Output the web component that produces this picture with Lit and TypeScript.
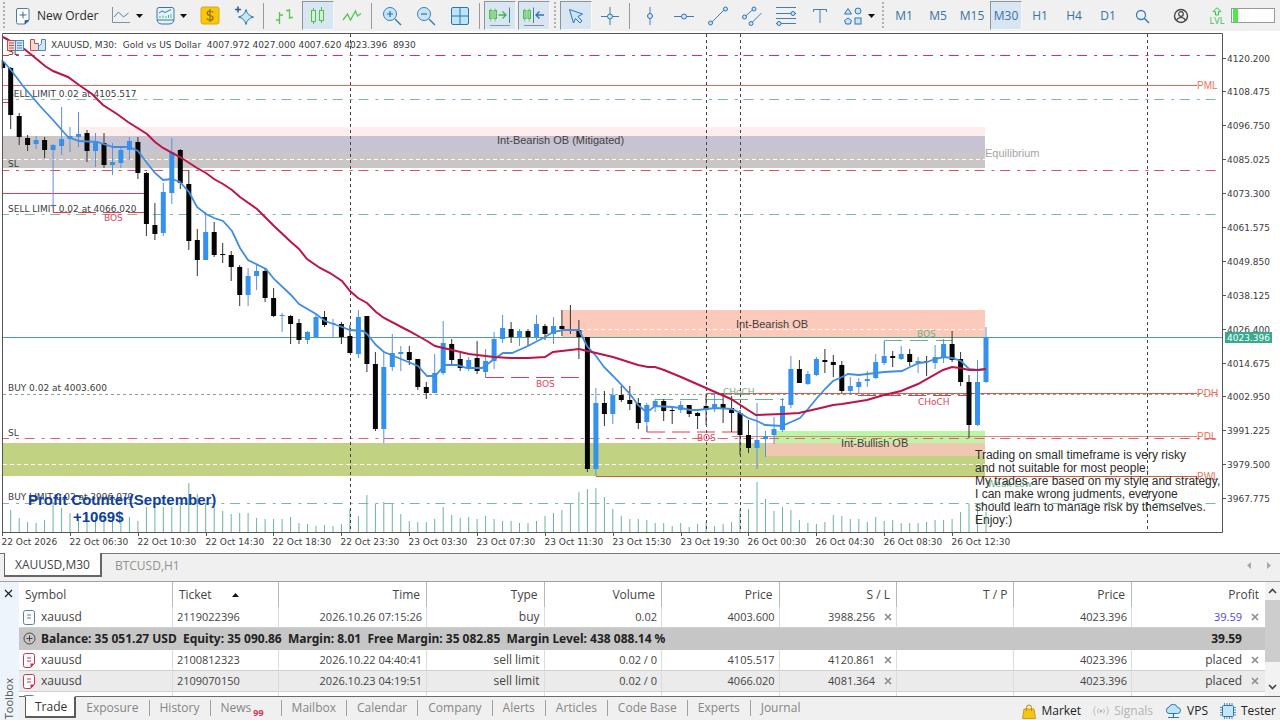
import { LitElement, html, svg, css, nothing } from "lit";
import { customElement, state } from "lit/decorators.js";
import { classMap } from "lit/directives/class-map.js";

type Candle = [up: 0 | 1, high: number, top: number, bottom: number, low: number];

const X0 = 2.2;
const STEP = 8.481;
const cx = (i: number) => Math.round((X0 + STEP * i) * 10) / 10;

const candles: Candle[] = [
  [0, 60, 62, 68, 69], [0, 67, 68, 115, 129], [0, 113, 116, 137, 145], [0, 135, 138, 145, 151],
  [1, 136, 140, 144, 149], [0, 137, 140, 150, 158], [1, 144, 145, 150, 208], [1, 107, 139, 146, 155],
  [1, 127, 136, 139, 152], [1, 112, 134, 137, 147], [0, 130, 133, 151, 162], [1, 133, 143, 151, 167],
  [0, 133, 143, 165, 168], [1, 143, 162, 165, 175], [1, 147, 150, 163, 168], [1, 137, 141, 150, 160],
  [0, 137, 142, 173, 179], [0, 172, 173, 224, 236], [0, 203, 225, 234, 240], [1, 183, 192, 233, 236],
  [1, 138, 152, 193, 204], [0, 149, 150, 183, 189], [0, 170, 184, 241, 250], [0, 229, 240, 260, 276],
  [1, 212, 232, 260, 260], [0, 222, 232, 255, 257], [0, 243, 254, 255, 263], [0, 251, 255, 267, 281],
  [0, 265, 267, 295, 306], [1, 268, 276, 295, 306], [1, 264, 271, 276, 290], [0, 268, 271, 298, 302],
  [0, 288, 298, 316, 317], [1, 313, 315, 316, 332], [0, 315, 316, 324, 344], [0, 319, 323, 340, 344],
  [1, 331, 332, 340, 344], [1, 314, 317, 337, 337], [0, 311, 317, 325, 327], [1, 319, 323, 324, 337],
  [0, 322, 324, 337, 344], [0, 325, 336, 353, 353], [1, 310, 317, 354, 358], [0, 316, 316, 364, 372],
  [0, 352, 364, 429, 431], [1, 352, 367, 429, 443], [1, 334, 353, 367, 371], [1, 346, 352, 354, 371],
  [0, 346, 352, 360, 365], [0, 359, 359, 387, 390], [0, 382, 387, 393, 399], [1, 354, 373, 393, 393],
  [1, 321, 343, 373, 375], [0, 339, 344, 360, 365], [0, 353, 359, 368, 371], [1, 357, 360, 368, 371],
  [0, 341, 358, 371, 374], [1, 349, 361, 372, 378], [1, 332, 339, 361, 369], [1, 315, 328, 339, 343],
  [0, 322, 329, 337, 343], [1, 329, 331, 337, 346], [0, 329, 331, 337, 346], [1, 315, 324, 337, 340],
  [0, 324, 326, 334, 340], [1, 317, 326, 334, 344], [0, 310, 326, 329, 336], [0, 305, 329, 330, 334],
  [0, 320, 330, 337, 359], [0, 337, 337, 469, 472], [1, 388, 403, 469, 476], [0, 391, 403, 414, 426],
  [1, 388, 395, 414, 424], [0, 386, 395, 400, 402], [0, 386, 400, 404, 410], [0, 398, 403, 423, 429],
  [1, 403, 405, 422, 432], [1, 399, 401, 406, 412], [0, 399, 401, 411, 421], [0, 407, 410, 411, 424],
  [1, 401, 405, 410, 413], [0, 405, 405, 414, 417], [0, 412, 413, 416, 429], [0, 395, 406, 410, 425],
  [1, 393, 404, 409, 412], [0, 393, 404, 408, 423], [0, 396, 408, 413, 432], [0, 410, 413, 435, 455],
  [0, 420, 435, 448, 453], [1, 403, 440, 448, 469], [1, 431, 436, 439, 457], [1, 417, 429, 435, 444],
  [1, 398, 406, 430, 432], [1, 356, 369, 405, 408], [0, 360, 369, 383, 383], [1, 371, 374, 384, 385],
  [1, 357, 359, 375, 376], [0, 349, 360, 362, 373], [0, 355, 362, 365, 377], [0, 361, 365, 391, 393],
  [1, 377, 386, 391, 393], [1, 378, 382, 387, 393], [1, 371, 379, 381, 387], [1, 354, 362, 378, 379],
  [1, 341, 356, 363, 365], [0, 351, 356, 358, 367], [1, 346, 354, 359, 360], [0, 349, 354, 362, 366],
  [1, 357, 361, 363, 373], [0, 356, 361, 362, 376], [1, 345, 357, 363, 369], [1, 339, 344, 358, 363],
  [0, 331, 344, 360, 362], [0, 352, 359, 382, 386], [0, 375, 382, 425, 438], [1, 360, 382, 425, 426],
  [1, 327, 337, 382, 383],
];

const volumeTops = [
  532, 510, 518, 522, 523, 520, 502, 508, 513, 516, 514, 517, 515, 516, 518, 517, 521, 507, 508, 507, 507, 505,
  483, 494, 503, 507, 511, 514, 513, 513, 518, 519, 519, 519, 517, 523, 524, 526, 525, 526, 524, 509, 516, 495,
  504, 502, 504, 514, 521, 522, 522, 519, 507, 515, 518, 517, 519, 516, 519, 521, 521, 523, 523, 521, 516, 513,
  510, 504, 492, 489, 488, 497, 509, 516, 519, 519, 520, 523, 523, 526, 523, 527, 524, 522, 526, 524, 522, 509,
  509, 482, 499, 511, 507, 510, 520, 523, 524, 522, 515, 516, 519, 519, 522, 517, 521, 520, 523, 523, 523, 522,
  520, 520, 519, 512, 504, 504, 512,
];

const fastAverage =
  "3,61 11,70 23,86 40,106 53,120 68,137 79,141 97,142 113,147 129,147 138,151 147,163 155,173 163,180 172,179 180,182 189,192 197,207 206,214 214,218 223,221 232,231 240,248 248,260 266,269 274,279 291,295 299,304 316,314 325,321 342,327 350,330 363,331 367,334 376,345 384,352 401,359 418,366 427,376 435,376 445,365 457,365 467,368 482,368 493,360 503,353 512,353 528,346 545,337 553,332 563,330 579,330 587,346 596,356 604,367 613,376 630,394 638,405 645,411 650,410 655,406 672,407 681,408 690,410 698,410 715,408 732,409 740,413 748,418 757,421 765,425 782,426 791,422 800,418 808,409 817,398 825,389 833,381 842,377 848,374 859,375 867,374 876,373 884,372 902,371 910,367 919,363 927,362 935,359 944,357 952,358 961,361 969,369 978,370 986,369";
const slowAverage =
  "3,37 23,48 33,56 45,66 53,71 68,77 79,85 92,94 103,105 117,114 128,122 147,134 155,142 163,148 180,157 197,168 206,173 214,179 223,184 232,190 240,197 257,209 274,226 291,242 299,249 307,259 320,268 330,273 342,281 350,291 358,298 367,303 376,312 384,318 409,331 427,341 435,346 452,350 469,354 494,357 511,358 528,358 545,357 553,352 579,349 596,353 613,357 638,365 648,367 655,367 664,370 681,377 706,388 731,399 748,410 756,415 782,414 799,413 825,407 833,405 842,404 867,400 884,395 901,391 918,384 943,370 952,367 960,368 969,370 978,370 986,369";

const prices = [
  "4120.200", "4108.475", "4096.750", "4085.025", "4073.300", "4061.575", "4049.850", "4038.125",
  "4026.400", "4014.675", "4002.950", "3991.225", "3979.500", "3967.775",
];
const times = [
  "22 Oct 2026", "22 Oct 06:30", "22 Oct 10:30", "22 Oct 14:30", "22 Oct 18:30", "22 Oct 23:30", "23 Oct 03:30",
  "23 Oct 07:30", "23 Oct 11:30", "23 Oct 15:30", "23 Oct 19:30", "26 Oct 00:30", "26 Oct 04:30", "26 Oct 08:30",
  "26 Oct 12:30",
];
const note = [
  "Trading on small timeframe is very risky",
  "and not suitable for most people.",
  "My trades are based on my style and strategy,",
  "I can make wrong judments, everyone",
  "should learn to manage risk by themselves.",
  "Enjoy:)",
];

@customElement("price-chart")
class PriceChart extends LitElement {
  static styles = css`
    :host { display: block; background: #fff; }
    svg { display: block; width: 100%; height: auto; }
    text { font-family: "DejaVu Sans", sans-serif; font-size: 9px; fill: #3c3c3c; white-space: pre; }
    .arial { font-family: "Liberation Sans", Arial, sans-serif; font-size: 11px; fill: #45403f; }
    .note { font-family: "Liberation Sans", Arial, sans-serif; font-size: 12px; fill: #2c2c2c; }
    .profit { font-family: "Liberation Sans", Arial, sans-serif; font-size: 15px; font-weight: 700; fill: #103f9f; }
    .level { font-family: "Liberation Sans", Arial, sans-serif; font-size: 10px; fill: #ee7058; }
    .muted { font-family: "Liberation Sans", Arial, sans-serif; font-size: 11px; fill: #a3a3a3; }
    .sell { fill: #dd4560; }
    .buy { fill: #6cb389; }
    .now { fill: #fff; }
  `;

  private dashDot(y: number, color: string) {
    return svg`<line x1="3" x2="1218" y1=${y} y2=${y} stroke=${color} stroke-dasharray="10 7 3 5.670" stroke-dashoffset="4"/>`;
  }

  private candle([up, high, top, bottom, low]: Candle, i: number) {
    const x = cx(i);
    const color = up ? "#3492ee" : "#050505";
    return svg`
      <line x1=${x} x2=${x} y1=${high} y2=${low} stroke=${up ? "#5f8fe0" : "#333"}/>
      <rect x=${i ? x - 2.5 : x} y=${top} width=${i ? 5 : 3} height=${Math.max(bottom - top, 1)} fill=${color}/>`;
  }

  render() {
    return html`<svg viewBox="0 31 1280 522" role="img" aria-label="XAUUSD M30 candlestick chart">
      <rect x="3" y="136" width="982" height="32" fill="#cac6c6"/>
      <rect x="78" y="127" width="907" height="9" fill="#fdeeed"/>
      <rect x="78" y="136" width="907" height="16" fill="#c6c4d3"/>
      <rect x="562" y="310" width="423" height="27" fill="#fbcabb"/>
      <rect x="3" y="443" width="982" height="33" fill="#c1d383"/>
      <rect x="774" y="431" width="211" height="12" fill="#bbf6a5"/>
      <rect x="765" y="443" width="220" height="13" fill="#f0c8b1"/>

      <g stroke="#fff" stroke-dasharray="4 3">
        <line x1="3" x2="985" y1="159.5" y2="159.5"/>
        <line x1="580" x2="985" y1="329.5" y2="329.5"/>
        <line x1="3" x2="985" y1="464.5" y2="464.5"/>
      </g>

      ${this.dashDot(55.5, "#d8305a")} ${this.dashDot(99.5, "#7fb8a2")}
      ${this.dashDot(170.5, "#d8506c")} ${this.dashDot(214.5, "#7fb8a2")}
      ${this.dashDot(438.5, "#e65c78")} ${this.dashDot(503.5, "#7fb8a2")}
      <line x1="3" x2="1197" y1="85.5" y2="85.5" stroke="#f2625e"/>
      <line x1="3" x2="1222" y1="337.5" y2="337.5" stroke="#4fa389"/>
      <line x1="3" x2="1218" y1="394.5" y2="394.5" stroke="#8c9c98" stroke-dasharray="3 3"/>
      <line x1="706" x2="1197" y1="393.5" y2="393.5" stroke="#e8553e"/>
      <line x1="732" x2="1197" y1="436.5" y2="436.5" stroke="#d8887f"/>
      <line x1="596" x2="1197" y1="476.5" y2="476.5" stroke="#cf5f35"/>
      <g stroke="#e33b4f">
        <line x1="3" x2="11" y1="102.5" y2="102.5"/>
        <line x1="3" x2="147" y1="193.5" y2="193.5"/>
        <line x1="53" x2="147" y1="212.5" y2="212.5" stroke-dasharray="18 7"/>
        <path d="M485.500 372v5.500h96" fill="none" stroke-dasharray="24 7 18 7 18 7 18 7"/>
        <path d="M647 426v6h93" fill="none" stroke-dasharray="24 7 18 7 18 7 18 7"/>
        <line x1="858" x2="969" y1="395.500" y2="395.500" stroke-dasharray="18 7"/>
      </g>
      <g stroke="#6cb389" fill="none">
        <line x1="655" x2="784" y1="399.500" y2="399.500" stroke-dasharray="18 7"/>
        <path d="M884.500 354v-13.500h68" stroke-dasharray="31 8 18 8 18"/>
      </g>

      <g stroke="#6bb39c">
        ${volumeTops.map((y, i) => svg`<line x1=${cx(i)} x2=${cx(i)} y1=${y} y2="532"/>`)}
      </g>

      <text x="8" y="55">SL</text>
      <text x="8" y="97">SELL LIMIT 0.02 at 4105.517</text>
      <text x="8" y="167">SL</text>
      <text x="8" y="212">SELL LIMIT 0.02 at 4066.020</text>
      <text x="8" y="391">BUY 0.02 at 4003.600</text>
      <text x="8" y="436">SL</text>
      <text x="8" y="500">BUY LIMIT 0.02 at 3996.079</text>

      <g stroke="#444" stroke-dasharray="3 3">
        ${[350.5, 706.5, 740.5, 1147.5].map((x) => svg`<line x1=${x} x2=${x} y1="34" y2="532"/>`)}
      </g>

      ${candles.map((c, i) => this.candle(c, i))}
      <polyline points=${fastAverage} fill="none" stroke="#3f8ee0" stroke-width="1.8"/>
      <polyline points=${slowAverage} fill="none" stroke="#bd1347" stroke-width="2"/>

      <text class="arial" x="497" y="144">Int-Bearish OB (Mitigated)</text>
      <text class="arial" x="736" y="328">Int-Bearish OB</text>
      <text class="arial" x="841" y="447">Int-Bullish OB</text>
      <text class="muted" x="985" y="157">Equilibrium</text>
      <text class="sell" x="104" y="221">BOS</text>
      <text class="sell" x="536" y="387">BOS</text>
      <text class="sell" x="697" y="441">BOS</text>
      <text class="sell" x="918" y="405">CHoCH</text>
      <text class="buy" x="723" y="395">CHoCH</text>
      <text class="buy" x="917" y="337">BOS</text>
      <text class="buy" x="987" y="487">Weak Low</text>
      <text class="level" x="1197" y="89">PML</text>
      <text class="level" x="1197" y="397">PDH</text>
      <text class="level" x="1197" y="440">PDL</text>
      <text class="level" x="1197" y="480">PWL</text>
      ${note.map((line, i) => svg`<text class="note" x="975" y=${459 + 13 * i}>${line}</text>`)}
      <text class="profit" x="28" y="505">Profit Counter(September)</text>
      <text class="profit" x="73" y="522">+1069$</text>

      <g>
        <rect x="7.500" y="40.500" width="8" height="10" fill="#f8d8d6" stroke="#c0504d"/>
        <rect x="15.500" y="40.500" width="8" height="10" fill="#d3e6f8" stroke="#4f86bd"/>
        <path d="M9 43h5M9 45.500h5M9 48h5" stroke="#c0504d"/>
        <path d="M17 43h5M17 45.500h5M17 48h5" stroke="#4f86bd"/>
        <path d="M30.500 39.500h4v4h4v7h-8z" fill="#f8d8d6" stroke="#c0504d"/>
        <path d="M45.500 39.500h-4v4l-2 2-1-1v6h7z" fill="#d3e6f8" stroke="#4f86bd"/>
      </g>
      <text x="51" y="48" xml:space="preserve">XAUUSD, M30:  Gold vs US Dollar  4007.972 4027.000 4007.620 4023.396  8930</text>

      <path d="M2.500 532V33.500H1222.500V532.500H2" fill="none" stroke="#555"/>
      ${prices.map((p, i) => {
        const y = Math.round(57.5 + 33.89 * i);
        return svg`<line x1="1222" x2="1226" y1=${y + 0.5} y2=${y + 0.5} stroke="#555"/><text x="1227" y=${y + 4}>${p}</text>`;
      })}
      <rect x="1225" y="332" width="47" height="11" fill="#36ab8d"/>
      <text class="now" x="1227" y="341">4023.396</text>
      ${times.map((t, i) => {
        const x = i === 0 ? 2.5 : Math.round(2 + 67.85 * i) + 0.5;
        return svg`<line x1=${x} x2=${x} y1="532" y2="536" stroke="#555"/><text x=${x - 1} y="545">${t}</text>`;
      })}
    </svg>`;
  }
}

const glyphs = {
  order: svg`<path d="M3.500 1.500h10q1.500 0 1.500 1.500v10l-4 4h-7q-1.500 0-1.500-1.500V3q0-1.500 1.500-1.500z" transform="translate(-1 0)" fill="#fff" stroke="#4a7cab"/><path d="M10 17v-3.500h4z" fill="#2f6da5" stroke="#2f6da5"/><path d="M8 4.500v7M4.500 8h7" stroke="#2f6da5"/>`,
  line: svg`<path d="M1.500 1v15.500H19" fill="none" stroke="#8a8f96"/><path d="M3 11l4.500-5 5 5 5-4" fill="none" stroke="#4a86bd"/>`,
  indicator: svg`<path d="M4 1.500h13q2 0 2 2v9q0 5.500-5 5.500H7q-5 0-5-5.500v-9q0-2 2-2z" fill="#e4f2fc" stroke="#3a76ad"/><path d="M2 14h17" stroke="#3a76ad"/><path d="M4 7l3-2 3 1.500L16 3.500" fill="none" stroke="#3a76ad"/><path d="M5 12v-2M8 12V9.500M11 12v-2M13.500 12V9M16 12V8" stroke="#4ec25a"/>`,
  dollar: svg`<rect x="1" y="1" width="18" height="17" rx="2" fill="#f7c708" stroke="#dba90a"/><path d="M13 6.500q-.8-1.500-3-1.500-2.800 0-2.800 2.200 0 1.800 2.900 2.300 3 .5 3 2.400 0 2.300-3 2.300-2.600 0-3.300-1.800M10 3v13" fill="none" stroke="#9a6a0a" stroke-width="1.200"/>`,
  sparkle: svg`<path d="M12 3.500q1.300 6.200 7.500 7.500-6.200 1.300-7.500 7.500-1.300-6.200-7.500-7.500 6.200-1.300 7.500-7.500z" fill="#c5e6fb" stroke="#2f74b3"/><path d="M4 .5v6M1 3.500h6" stroke="#2c5f94" stroke-width="1.600"/>`,
  bars: svg`<path d="M5.500 6v12M2 14h3.500M5.500 9H9M15.500 3v10M12 4.500h3.500M15.500 11.500H19" fill="none" stroke="#56c457" stroke-width="1.300"/>`,
  candles: svg`<rect x="3.500" y="4.500" width="4" height="11" fill="#d3f3d6" stroke="#4fc04f"/><rect x="11.500" y="4.500" width="4" height="10" fill="#d3f3d6" stroke="#4fc04f"/><path d="M5.500 2v2.500M5.500 15.500V18M13.500 1v3.500M13.500 14.500V17" stroke="#4fc04f"/>`,
  zigzag: svg`<path d="M1 14l4.500-6 3 6 5-9 2 5L19 7.500" fill="none" stroke="#56c457" stroke-width="1.300"/>`,
  zoomIn: svg`<circle cx="8" cy="8" r="6.500" fill="#c8e6fb" stroke="#3a7db8"/><path d="M13 13l6 6" stroke="#3a7db8" stroke-width="1.500"/><path d="M8 5v6M5 8h6" stroke="#2d6da6" stroke-width="1.200"/>`,
  zoomOut: svg`<circle cx="8" cy="8" r="6.500" fill="#c8e6fb" stroke="#3a7db8"/><path d="M13 13l6 6" stroke="#3a7db8" stroke-width="1.500"/><path d="M5 8h6" stroke="#2d6da6" stroke-width="1.200"/>`,
  grid: svg`<rect x="1.500" y="1.500" width="17" height="17" rx="1.500" fill="#bfe3fb" stroke="#2f74b3"/><path d="M10 1.500v17M1.500 10h17" stroke="#2f74b3"/>`,
  autoscroll: svg`<rect x="-.5" y="4.500" width="2.500" height="8" fill="#d3f3d6" stroke="#4fc04f"/><rect x="4" y="4.500" width="2.500" height="8" fill="#d3f3d6" stroke="#4fc04f"/><path d="M.7 2.500v13M5.200 2.500v13" stroke="#4fc04f" stroke-width=".7"/><path d="M8.500 9h7M12.500 5.500L16 9l-3.500 3.500" fill="none" stroke="#3cb84a" stroke-width="1.400"/><path d="M19.500 1.500V17" stroke="#4a7cab"/><path d="M0 19.500h20" stroke="#8a9098"/>`,
  shift: svg`<rect x="-.5" y="4.500" width="2.500" height="8" fill="#d3f3d6" stroke="#4fc04f"/><rect x="4" y="4.500" width="2.500" height="8" fill="#d3f3d6" stroke="#4fc04f"/><path d="M.7 2.500v13M5.200 2.500v13" stroke="#4fc04f" stroke-width=".7"/><path d="M9.500 1.500V17" stroke="#4a7cab"/><path d="M12.500 9H20M15.500 5.500L12 9l3.500 3.500" fill="none" stroke="#2f74b3" stroke-width="1.400"/><path d="M0 19.500h20" stroke="#8a9098"/>`,
  cursor: svg`<path d="M3.500 3.500l13 4.500-4.500 2.500 4 4.500-2 2-4.500-4.500-2 4.500z" fill="#c8e6fb" stroke="#2f74b3"/>`,
  cross: svg`<path d="M10 1v18M1 10.500h18" stroke="#3f7fb8"/><circle cx="10" cy="10.500" r="2.500" fill="#c8e6fb" stroke="#2f74b3"/>`,
  vline: svg`<path d="M10 1v18" stroke="#3f7fb8"/><circle cx="10" cy="10" r="2.500" fill="#c8e6fb" stroke="#2f74b3"/>`,
  hline: svg`<path d="M0 10.500h20" stroke="#3f7fb8"/><circle cx="10" cy="10.500" r="2.500" fill="#c8e6fb" stroke="#2f74b3"/>`,
  trend: svg`<path d="M2.500 17.500L17.500 2.500" stroke="#3f7fb8"/><circle cx="2.500" cy="17" r="2" fill="#c8e6fb" stroke="#2f74b3"/><circle cx="17.500" cy="3" r="2" fill="#c8e6fb" stroke="#2f74b3"/>`,
  channel: svg`<path d="M2.500 11L11.500 3M9 17.500L19.500 7" stroke="#3f7fb8"/><circle cx="2.500" cy="11" r="2" fill="#c8e6fb" stroke="#2f74b3"/><circle cx="12" cy="3" r="2" fill="#c8e6fb" stroke="#2f74b3"/><circle cx="9" cy="17.500" r="2" fill="#c8e6fb" stroke="#2f74b3"/>`,
  levels: svg`<path d="M0 1.500h20M0 7.500h20M0 12.500h20M0 17.500h20" stroke="#3f7fb8"/><circle cx="17" cy="7.500" r="2" fill="#c8e6fb" stroke="#2f74b3"/><circle cx="3" cy="17.500" r="2" fill="#c8e6fb" stroke="#2f74b3"/>`,
  text: svg`<path d="M3.500 6V3.500h13V6M10 3.500V17" fill="none" stroke="#3f7fb8"/>`,
  shapes: svg`<path d="M5 2.500L8.500 8h-7z" fill="#c8e6fb" stroke="#2f74b3"/><circle cx="15" cy="5" r="3" fill="#c8e6fb" stroke="#2f74b3"/><path d="M5 12l3.500 2.500L7.200 18H2.800L1.500 14.500z" fill="#c8e6fb" stroke="#2f74b3"/><rect x="12" y="12" width="6" height="6" fill="#c8e6fb" stroke="#2f74b3"/>`,
  search: svg`<circle cx="9" cy="9" r="4.500" fill="none" stroke="#3a7db8" stroke-width="1.300"/><path d="M12.300 12.300L17 17" stroke="#3a7db8" stroke-width="1.500"/>`,
  account: svg`<circle cx="10" cy="10" r="6.500" fill="none" stroke="#444" stroke-width="1.400"/><circle cx="10" cy="8" r="2.300" fill="none" stroke="#444" stroke-width="1.200"/><path d="M5.500 14.500q1-3 4.500-3t4.500 3" fill="none" stroke="#444" stroke-width="1.200"/>`,
  arrowUp: svg`<path d="M5 0.700L9 4.700H6.500V8h-3V4.700H1z" fill="#d6f8d9" stroke="#3ac24e"/>`,
};

interface Tool { glyph?: keyof typeof glyphs; label: string; on?: boolean; drop?: boolean; kind?: "sep" | "grip" | "frame" }
const sep: Tool = { kind: "sep", label: "" };
const grip: Tool = { kind: "grip", label: "" };
const tools: Tool[] = [
  { glyph: "line", label: "Chart type", drop: true }, { glyph: "indicator", label: "Indicators", drop: true },
  { glyph: "dollar", label: "Trading" }, { glyph: "sparkle", label: "Algo" }, sep,
  { glyph: "bars", label: "Bar chart" }, { glyph: "candles", label: "Candlesticks", on: true },
  { glyph: "zigzag", label: "Line chart" }, sep,
  { glyph: "zoomIn", label: "Zoom in" }, { glyph: "zoomOut", label: "Zoom out" }, { glyph: "grid", label: "Tile windows" }, sep,
  { glyph: "autoscroll", label: "Auto scroll", on: true }, { glyph: "shift", label: "Chart shift", on: true }, grip,
  { glyph: "cursor", label: "Cursor", on: true }, { glyph: "cross", label: "Crosshair" }, sep,
  { glyph: "vline", label: "Vertical line" }, { glyph: "hline", label: "Horizontal line" },
  { glyph: "trend", label: "Trendline" }, { glyph: "channel", label: "Channel" }, { glyph: "levels", label: "Fibonacci" },
  { glyph: "text", label: "Text" }, { glyph: "shapes", label: "Shapes", drop: true }, grip,
  ...["M1", "M5", "M15", "M30", "H1", "H4", "D1"].map((label): Tool => ({ label, kind: "frame", on: label === "M30" })),
];

@customElement("tool-bar")
class ToolBar extends LitElement {
  static styles = css`
    :host { display: flex; align-items: center; height: 31px; background: #f0f0f0; }
    button { border: 1px solid transparent; background: none; padding: 0; font: 12px/16px "Open Sans", sans-serif; display: flex; align-items: center; justify-content: center; box-sizing: border-box; flex: none; }
    svg { display: block; flex: none; overflow: visible; }
    .order { width: 97px; gap: 5px; color: #2b2b2b; justify-content: flex-start; padding-left: 6px; white-space: nowrap; }
    .tool { width: 32px; height: 29px; margin: 0 1px; }
    .drop { width: 44px; height: 29px; gap: 5px; margin: 0; justify-content: flex-start; padding-left: 5px; }
    .last { width: 42px; }
    .frame { color: #3573a8; }
    .on { background: #d9e6f2; border-color: #8f9499 #f4f8fb #f4f8fb #8f9499; }
    .sep { width: 6px; height: 26px; flex: none; background: linear-gradient(#9a9a9a, #9a9a9a) 2px 0 / 1px 100% no-repeat; }
    .grip { width: 8px; height: 28px; flex: none; background: repeating-linear-gradient(#b0b0b0 0 2px, transparent 2px 4px) 3px 0 / 2px 100% no-repeat; }
    .account { width: 44px; margin-left: auto; }
    .level { width: 28px; flex: none; display: flex; flex-direction: column; align-items: center; color: #3ac24e; font: 9px/9px "Open Sans", sans-serif; }
    .battery { width: 44px; height: 15px; box-sizing: border-box; flex: none; margin: 0 5px 0 0; border: 1px solid #999; background: #fff; padding: 0 1px; }
    .charge { display: block; width: 5px; height: 13px; background: #4bea46; }
  `;

  private icon(name: keyof typeof glyphs) {
    return html`<svg width="20" height="20" viewBox="0 0 20 20">${glyphs[name]}</svg>`;
  }

  render() {
    return html`
      <span class="grip"></span>
      <button class="order">
        <svg width="17" height="18" viewBox="0 0 17 18">${glyphs.order}</svg>New Order
      </button>
      ${tools.map((t) =>
        t.kind === "sep" || t.kind === "grip"
          ? html`<span class=${t.kind}></span>`
          : html`<button
              class=${classMap({ tool: true, on: !!t.on, drop: !!t.drop, last: t.glyph === "shapes", frame: t.kind === "frame" })}
              aria-label=${t.label}
            >
              ${t.glyph ? this.icon(t.glyph) : t.label}
              ${t.drop ? html`<svg width="7" height="4" viewBox="0 0 7 4"><path d="M0 0h7L3.500 4z" fill="#111"/></svg>` : nothing}
            </button>`
      )}
      <button class="tool" aria-label="Search">${this.icon("search")}</button>
      <button class="account" aria-label="Account">${this.icon("account")}</button>
      <span class="level"><svg width="10" height="9" viewBox="0 0 10 9">${glyphs.arrowUp}</svg>LVL</span>
      <span class="battery"><span class="charge"></span></span>
    `;
  }
}

interface Order { ticket: string; time: string; type: string; volume: string; open: string; sl: string; now: string; result: string; gain?: boolean; sell?: boolean }
const position: Order = { ticket: "2119022396", time: "2026.10.26 07:15:26", type: "buy", volume: "0.02", open: "4003.600", sl: "3988.256", now: "4023.396", result: "39.59", gain: true };
const pending: Order[] = [
  { ticket: "2100812323", time: "2026.10.22 04:40:41", type: "sell limit", volume: "0.02 / 0", open: "4105.517", sl: "4120.861", now: "4023.396", result: "placed", sell: true },
  { ticket: "2109070150", time: "2026.10.23 04:19:51", type: "sell limit", volume: "0.02 / 0", open: "4066.020", sl: "4081.364", now: "4023.396", result: "placed", sell: true },
];
const sections = ["Trade", "Exposure", "History", "News", "Mailbox", "Calendar", "Company", "Alerts", "Articles", "Code Base", "Experts", "Journal"];

@customElement("tool-box")
class ToolBox extends LitElement {
  static styles = css`
    :host { display: grid; grid-template-columns: 19px minmax(0, 1fr); border-top: 1px solid #a0a0a0; background: #f0f0f0; font: 12px/16px "Open Sans", sans-serif; color: #444; min-height: 0; }
    button { border: 0; background: none; padding: 0; font: inherit; color: inherit; }
    svg { display: block; flex: none; overflow: visible; }
    .side { display: flex; flex-direction: column; justify-content: space-between; align-items: center; background: #edf4fb; padding: 7px 2px 1px 0; }
    .name { writing-mode: vertical-rl; transform: rotate(180deg); line-height: 12px; font-size: 11px; color: #555; }
    .main { display: flex; flex-direction: column; min-width: 0; min-height: 0; }
    .pane { flex: 1; display: flex; min-height: 0; overflow: hidden; background: #fff; border-bottom: 1px solid #6b6b6b; }
    .grid { flex: 1; min-width: 0; overflow: hidden; }
    table { width: 100%; table-layout: fixed; border-collapse: separate; border-spacing: 0; }
    th, td { padding: 0 4px; height: 21px; box-sizing: border-box; text-align: right; font-weight: 400; border-right: 1px solid #dcdcdc; white-space: nowrap; }
    td { border-bottom: 1px solid #d0d0d0; font-size: 11px; }
    th { height: 25px; padding: 0 6px; border-right-color: #b9b9b9; }
    th:last-child, td:last-child { border-right: 0; padding-right: 6px; }
    .left { text-align: left; }
    .symbol { font-size: 12px; }
    .word { font-size: 12px; }
    .shade td { background: #ebebeb; }
    .total td { height: 22px; background: #c6c6c6; border-right: 0; border-bottom-color: #c6c6c6; font: 700 12px/16px "Noto Sans", sans-serif; color: #222; }
    .row { display: flex; align-items: center; gap: 6px; }
    .end { justify-content: flex-end; gap: 9px; }
    .sort { display: flex; align-items: center; gap: 20px; }
    .gain { color: #5546cf; }
    .wide { gap: 5px; }
    .total .gap { padding-right: 23px; }
    .pre { white-space: pre; }
    .scroll { width: 15px; display: flex; flex-direction: column; align-items: center; background: #f2f2f2; flex: none; }
    .scroll button { height: 18px; width: 15px; display: flex; align-items: center; justify-content: center; }
    .track { flex: 1; align-self: stretch; }
    .thumb { height: 80%; background: #cdcdcd; }
    .foot { height: 23px; display: flex; align-items: flex-start; padding: 0 4px 0 6px; flex: none; }
    .tab { height: 16px; margin-top: 3px; padding: 0 10px; color: #858585; border-right: 1px solid #a0a0a0; white-space: nowrap; }
    .tab:last-of-type { border-right: 0; }
    .tab.active { height: 22px; margin: -1px 0 0; padding: 0 7px 0 9px; background: #fff; color: #333; border: 1px solid #5c5c5c; border-top-color: #fff; border-width: 1px 2px 2px 1px; }
    .badge { color: #dc2f50; font-size: 9px; font-weight: 700; vertical-align: -4px; margin-left: 2px; }
    .tab.news { padding-right: 17px; }
    .status { margin-left: auto; display: flex; gap: 12px; padding-top: 6px; color: #222; }
    .status button { display: flex; align-items: center; gap: 5px; }
    .status .off { color: #b3b3b3; }
  `;

  @state() private section = "Trade";

  private cross() {
    return html`<button aria-label="Remove"><svg width="8" height="8" viewBox="0 0 8 8"><path d="M1 1l6 6M7 1L1 7" stroke="#8c8c8c" stroke-width="1.600"/></svg></button>`;
  }

  private doc(sell?: boolean) {
    const c = sell ? "#cc3355" : "#5d7f9f";
    return html`<svg width="12" height="15" viewBox="0 0 12 15"><path d="M2.500 .5h7q2 0 2 2v${sell ? "8l-4 4h-5" : "10q0 2-2 2h-7"}q-2 0-2-2v-10q0-2 2-2z" fill="#fff" stroke=${c}/><path d="M4 5h4M4 8h4" stroke=${c}/>${sell ? svg`<path d="M7.500 14.500v-4h4z" fill=${c}/>` : nothing}</svg>`;
  }

  private order(o: Order, shade = false) {
    return html`<tr class=${classMap({ shade })}>
      <td class="left symbol"><span class="row">${this.doc(o.sell)}xauusd</span></td>
      <td class="left">${o.ticket}</td>
      <td>${o.time}</td>
      <td class="word">${o.type}</td>
      <td>${o.volume}</td>
      <td>${o.open}</td>
      <td><span class="row end">${o.sl}${this.cross()}</span></td>
      <td></td>
      <td>${o.now}</td>
      <td class=${o.gain ? "" : "word"}><span class="row end"><span class=${o.gain ? "gain" : ""}>${o.result}</span>${this.cross()}</span></td>
    </tr>`;
  }

  render() {
    return html`
      <div class="side">
        <button aria-label="Close toolbox"><svg width="9" height="9" viewBox="0 0 9 9"><path d="M1 1l7 7M8 1L1 8" stroke="#222" stroke-width="1.200"/></svg></button>
        <span class="name">Toolbox</span>
      </div>
      <div class="main">
        <div class="pane">
          <div class="grid">
            <table>
              <colgroup>
                <col style="width:12.35%" /><col style="width:8.5%" /><col style="width:11.9%" /><col style="width:9.43%" /><col style="width:9.43%" />
                <col style="width:9.43%" /><col style="width:9.43%" /><col style="width:9.43%" /><col style="width:9.43%" /><col />
              </colgroup>
              <thead>
                <tr>
                  <th class="left">Symbol</th>
                  <th class="left"><span class="sort">Ticket <svg width="7" height="4" viewBox="0 0 7 4"><path d="M0 4h7L3.500 0z" fill="#111"/></svg></span></th>
                  <th>Time</th><th>Type</th><th>Volume</th><th>Price</th><th>S / L</th><th>T / P</th><th>Price</th><th>Profit</th>
                </tr>
              </thead>
              <tbody>
                ${this.order(position)}
                <tr class="total">
                  <td class="left" colspan="9">
                    <span class="row wide"><svg width="13" height="13" viewBox="0 0 13 13"><circle cx="6.500" cy="6.500" r="5.500" fill="none" stroke="#444"/><path d="M6.500 3.500v6M3.500 6.500h6" stroke="#444"/></svg><span class="pre">Balance: 35 051.27 USD  Equity: 35 090.86  Margin: 8.01  Free Margin: 35 082.85  Margin Level: 438 088.14 %</span></span>
                  </td>
                  <td class="gap">39.59</td>
                </tr>
                ${pending.map((o, i) => this.order(o, i % 2 === 1))}
                <tr>
                  <td class="left"><span class="row">${this.doc()}</span></td>
                  ${Array.from({ length: 9 }, () => html`<td></td>`)}
                </tr>
              </tbody>
            </table>
          </div>
          <div class="scroll">
            <button aria-label="Scroll up"><svg width="9" height="6" viewBox="0 0 9 6"><path d="M1 5l3.500-3.500L8 5" fill="none" stroke="#444" stroke-width="1.600"/></svg></button>
            <div class="track"><div class="thumb"></div></div>
            <button aria-label="Scroll down"><svg width="9" height="6" viewBox="0 0 9 6"><path d="M1 1l3.500 3.500L8 1" fill="none" stroke="#444" stroke-width="1.600"/></svg></button>
          </div>
        </div>
        <div class="foot">
          ${sections.map(
            (s) => html`<button class=${classMap({ tab: true, active: s === this.section, news: s === "News" })} @click=${() => (this.section = s)}>${s}${s === "News" ? html`<span class="badge">99</span>` : nothing}</button>`
          )}
          <div class="status">
            <button><svg width="14" height="15" viewBox="0 0 14 15"><path d="M2 5h10l1.500 9.500H.5z" fill="#f6c512" stroke="#cf9d0c"/><path d="M4.500 7V3.500a2.500 2.500 0 015 0V7" fill="none" stroke="#b98708"/></svg>Market</button>
            <button class="off"><svg width="16" height="12" viewBox="0 0 16 12"><circle cx="8" cy="6" r="1.500" fill="#b9b9b9"/><path d="M5.500 3.500q-2 2.500 0 5M10.500 3.500q2 2.500 0 5M2.500 1.500q-3.500 4.500 0 9M13.500 1.500q3.500 4.500 0 9" fill="none" stroke="#bdbdbd"/></svg>Signals</button>
            <button><svg width="17" height="15" viewBox="0 0 17 15"><path d="M4 9.500a3.200 3.200 0 010-6.300A4.500 4.500 0 0112.500 3.500a3 3 0 010 6z" fill="#bfe3fb" stroke="#2f74b3"/><path d="M8.500 9.500v4M3 13.500h11" stroke="#2f74b3" stroke-width="1.200"/></svg>VPS</button>
            <button><svg width="16" height="16" viewBox="0 0 16 16"><path d="M4.500 0v16M7 0v16M9.500 0v16M12 0v16M0 4.500h16M0 7h16M0 9.500h16M0 12h16" stroke="#2f74b3" stroke-width=".8"/><rect x="2.500" y="2.500" width="11" height="11" rx="1" fill="#c4e6fc" stroke="#2f74b3"/></svg>Tester</button>
          </div>
        </div>
      </div>
    `;
  }
}

@customElement("app-root")
class AppRoot extends LitElement {
  static styles = css`
    :host { display: flex; flex-direction: column; height: 100vh; overflow: hidden; background: #f0f0f0; }
    tool-bar, price-chart { flex: none; }
    tool-box { flex: 1; }
    .charts { display: flex; align-items: flex-start; height: 28px; box-sizing: border-box; border-top: 1px solid #777; padding: 0 6px 0 4px; flex: none; }
    .charts button { font: 12px/20px "Open Sans", sans-serif; color: #909090; background: none; border: 0; padding: 2px 13px; }
    .charts .active { background: #fff; color: #444; border: 1px solid #666; border-width: 0 2px 2px 1px; margin-top: -1px; padding: 2px 10px 0; }
    .charts .arrows { margin-left: auto; display: flex; gap: 16px; padding: 8px 3px 0 0; }
  `;

  render() {
    return html`
      <tool-bar></tool-bar>
      <price-chart></price-chart>
      <nav class="charts">
        <button class="active">XAUUSD,M30</button>
        <button>BTCUSD,H1</button>
        <span class="arrows">
          <svg width="4" height="7" viewBox="0 0 4 7"><path d="M4 0v7L0 3.500z" fill="#a8a8a8"/></svg>
          <svg width="4" height="7" viewBox="0 0 4 7"><path d="M0 0v7l4-3.500z" fill="#a8a8a8"/></svg>
        </span>
      </nav>
      <tool-box></tool-box>
    `;
  }
}
